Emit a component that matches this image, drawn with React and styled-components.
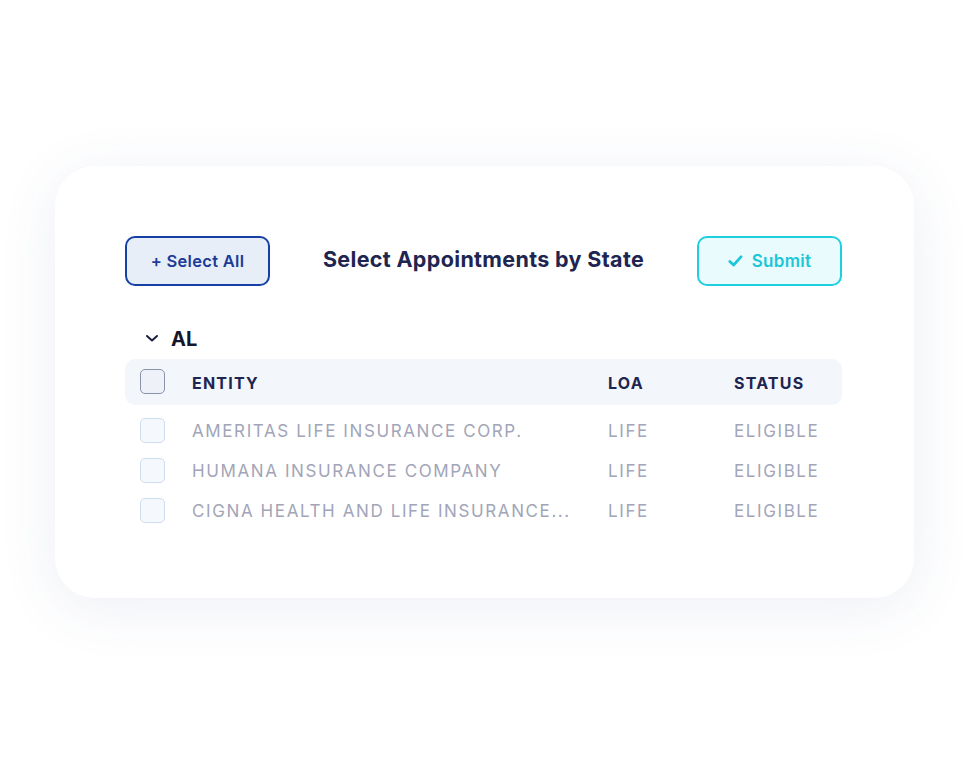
import React from "react";
import styled, { createGlobalStyle } from "styled-components";

const GlobalStyle = createGlobalStyle`
  * { box-sizing: border-box; }
  body {
    margin: 0;
    background: #ffffff;
    font-family: Inter, "Noto Sans", sans-serif;
  }
`;

const rows = [
  { entity: "AMERITAS LIFE INSURANCE CORP.", loa: "LIFE", status: "ELIGIBLE" },
  { entity: "HUMANA INSURANCE COMPANY", loa: "LIFE", status: "ELIGIBLE" },
  { entity: "CIGNA HEALTH AND LIFE INSURANCE...", loa: "LIFE", status: "ELIGIBLE" },
];

export default function App() {
  return (
    <Page>
      <GlobalStyle />
      <Card>
        <Toolbar>
          <OutlineButton $tone="blue">+ Select All</OutlineButton>
          <Title>Select Appointments by State</Title>
          <OutlineButton $tone="cyan">
            <svg width="15" height="12" viewBox="0 0 15 12" fill="none">
              <path d="M1.8 6.4l3.8 3.6L13 1.8" stroke="#1bc6d9" strokeWidth="2.7" strokeLinecap="round" strokeLinejoin="round" />
            </svg>
            Submit
          </OutlineButton>
        </Toolbar>

        <StateLabel>
          <svg width="14" height="9" viewBox="0 0 14 9" fill="none">
            <path d="M2 2l5 4.5L12 2" stroke="#1b1f3b" strokeWidth="2" strokeLinecap="round" strokeLinejoin="round" />
          </svg>
          AL
        </StateLabel>

        <HeadRow>
          <Box $head />
          <HeadCell>ENTITY</HeadCell>
          <HeadCell>LOA</HeadCell>
          <HeadCell>STATUS</HeadCell>
        </HeadRow>

        <Body>
          {rows.map((r) => (
            <Row key={r.entity}>
              <Box />
              <Cell>{r.entity}</Cell>
              <Cell>{r.loa}</Cell>
              <Cell>{r.status}</Cell>
            </Row>
          ))}
        </Body>
      </Card>
    </Page>
  );
}

const Page = styled.div`
  min-height: 100vh;
  display: flex;
  align-items: center;
  justify-content: center;
`;

const Card = styled.section`
  width: 859px;
  height: 432px;
  background: #ffffff;
  border-radius: 40px;
  padding: 70px 72px 0 70px;
  box-shadow: 0 10px 60px rgba(60, 80, 140, 0.09);
`;

const Toolbar = styled.div`
  display: flex;
  align-items: center;
  justify-content: space-between;
`;

const OutlineButton = styled.button`
  width: 145px;
  height: 50px;
  border-radius: 10px;
  display: flex;
  align-items: center;
  justify-content: center;
  gap: 9px;
  font-family: inherit;
  font-size: ${(p) => (p.$tone === "blue" ? "16.5px" : "17px")};
  font-weight: 600;
  letter-spacing: 0.3px;
  border: 2px solid ${(p) => (p.$tone === "blue" ? "#1740a6" : "#1dcfdf")};
  background: ${(p) => (p.$tone === "blue" ? "#e8eef8" : "#e9fbfd")};
  color: ${(p) => (p.$tone === "blue" ? "#1c3c96" : "#1bc6d9")};
  padding: 0;
`;

const Title = styled.h2`
  margin: 0 0 4px;
  font-size: 21.5px;
  font-weight: 700;
  color: #1e2550;
  letter-spacing: 0.35px;
`;

const StateLabel = styled.div`
  display: flex;
  align-items: center;
  gap: 12px;
  margin: 40px 0 0 20px;
  height: 26px;
  font-size: 20px;
  font-weight: 700;
  color: #14162a;
`;

const Grid = styled.div`
  display: grid;
  grid-template-columns: 52px 416px 126px 1fr;
  align-items: center;
  padding-left: 15px;
`;

const HeadRow = styled(Grid)`
  margin-top: 7px;
  height: 46px;
  padding-top: 2px;
  background: #f3f6fb;
  border-radius: 10px;
`;

const Body = styled.div`
  padding-top: 6px;
`;

const Row = styled(Grid)`
  height: 40px;
`;

const Box = styled.span`
  width: 25px;
  height: 25px;
  border-radius: 5px;
  border: 1px solid ${(p) => (p.$head ? "#8c92ac" : "#cfdcef")};
  background: ${(p) => (p.$head ? "#eef2f8" : "#f5f8fc")};
  margin-top: ${(p) => (p.$head ? "-2px" : "0")};
`;

const HeadCell = styled.span`
  font-size: 16px;
  font-weight: 700;
  color: #1e2550;
  letter-spacing: 1.2px;
`;

const Cell = styled.span`
  font-size: 17px;
  font-weight: 400;
  color: #a2a5b8;
  letter-spacing: 1.6px;
  white-space: nowrap;
`;
